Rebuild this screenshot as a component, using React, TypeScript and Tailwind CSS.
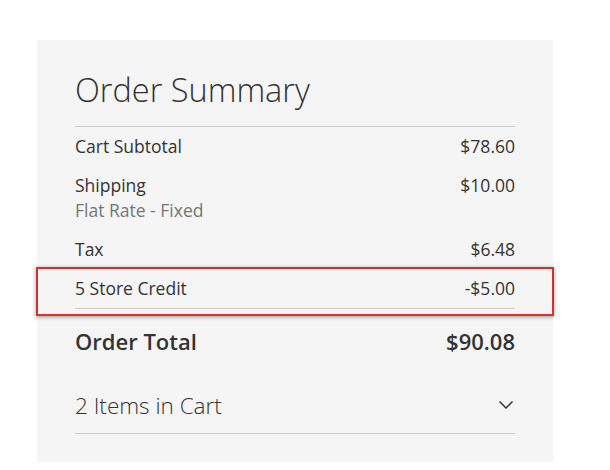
import React from "react";

const Row = ({ label, value, sub, cls = "" }: { label: string; value: string; sub?: string; cls?: string }) => (
  <div className={`flex justify-between text-[17.5px] leading-[25px] ${cls}`}>
    <div className="flex flex-col">
      <span>{label}</span>
      {sub && <span className="text-[#757575]">{sub}</span>}
    </div>
    <span>{value}</span>
  </div>
);

export default function App() {
  return (
    <div className="w-[610px] h-[470px] bg-white pt-[40px] pl-[37px] text-[#333]" style={{ fontFamily: '"Open Sans", sans-serif' }}>
      <div className="relative w-[516px] h-[422px] bg-[#f5f5f5] px-[38px] pt-[30px]">
        <h1 className="text-[32.5px] leading-[40px] font-light pb-[16px] border-b border-[#ccc]">Order Summary</h1>
        <Row label="Cart Subtotal" value="$78.60" cls="pt-[7px] pb-[7px]" />
        <Row label="Shipping" value="$10.00" sub="Flat Rate - Fixed" cls="py-[7px]" />
        <Row label="Tax" value="$6.48" cls="py-[7px]" />
        <Row label="5 Store Credit" value="-$5.00" cls="py-[7px] border-b border-[#ccc]" />
        <div className="flex justify-between text-[22px] leading-[30px] font-semibold pt-[17px]">
          <span>Order Total</span>
          <span>$90.08</span>
        </div>
        <div className="flex justify-between items-center mt-[35px] pb-[12px] border-b border-[#ccc]">
          <span className="text-[22.5px] leading-[30px] font-light">2 Items in Cart</span>
          <svg width="16" height="10" viewBox="0 0 16 10" className="mr-[1px] mt-[-2px]">
            <path d="M1.5 1.5 L8 8 L14.5 1.5" fill="none" stroke="#333" strokeWidth="1.5" />
          </svg>
        </div>
        <div className="absolute left-[-1px] top-[227px] w-[518px] h-[49px] border-2 border-[#d6322d] shadow-[0_1px_4px_rgba(0,0,0,0.4)]" />
      </div>
    </div>
  );
}
